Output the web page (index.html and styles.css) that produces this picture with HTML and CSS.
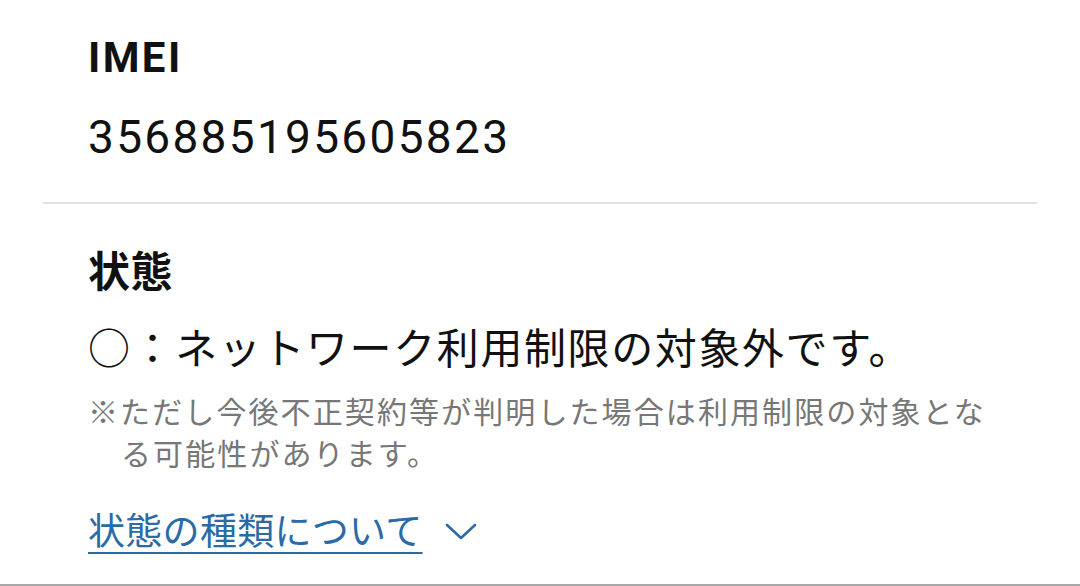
FILE: index.html
```html
<!DOCTYPE html>
<html lang="ja">
<head>
<meta charset="utf-8">
<link rel="stylesheet" href="styles.css">
</head>
<body>
<div class="page">
  <section class="item imei">
    <h2 class="label latin">IMEI</h2>
    <p class="value num">356885195605823</p>
  </section>
  <section class="item status">
    <h2 class="label">状態</h2>
    <p class="value main">○：ネットワーク利用制限の対象外です。</p>
    <p class="note">※ただし今後不正契約等が判明した場合は利用制限の対象となる可能性があります。</p>
    <a class="toggle" href="#"><span class="toggle-text">状態の種類について</span><svg class="chev" width="32" height="17" viewBox="0 0 32 17"><path d="M2 2 L16 15 L30 2" fill="none" stroke="#2a6aa6" stroke-width="2.6" stroke-linecap="round" stroke-linejoin="round"/></svg></a>
  </section>
</div>
</body>
</html>
```
FILE: styles.css
```css
html, body {
  margin: 0;
  padding: 0;
  background: #fff;
}
body {
  font-family: "Noto Sans CJK JP", "Noto Sans", sans-serif;
  color: #111;
  width: 1080px;
  height: 586px;
  overflow: hidden;
  border-bottom: 2px solid #a8a8a8;
  box-sizing: border-box;
}
.page {
  padding: 0 43px;
}
.item {
  padding: 0 45px;
}
.imei {
  padding-top: 28px;
  padding-bottom: 35px;
  border-bottom: 2px solid #e2e2e2;
}
.label {
  margin: 0;
  font-size: 42px;
  font-weight: 700;
  line-height: 60px;
  letter-spacing: 0.5px;
}
.latin {
  font-family: "Roboto", "Noto Sans CJK JP", sans-serif;
  letter-spacing: 2.4px;
}
.value {
  margin: 19px 0 0;
  line-height: 60px;
}
.num {
  font-family: "Roboto", "Noto Sans CJK JP", sans-serif;
  font-size: 46px;
  letter-spacing: 2.3px;
}
.status {
  padding-top: 35px;
}
.main {
  margin-top: 17px;
  font-size: 42px;
  letter-spacing: 1.6px;
}
.note {
  box-sizing: border-box;
  margin: 13px 0 0;
  font-size: 30px;
  line-height: 42px;
  letter-spacing: 2.1px;
  color: #777;
  padding-left: 33px;
  text-indent: -33px;
  width: 915px;
}
.toggle {
  display: inline-flex;
  align-items: center;
  gap: 22px;
  margin-top: 32px;
  text-decoration: none;
  color: #2a6aa6;
}
.toggle-text {
  font-size: 37px;
  line-height: 48px;
  letter-spacing: 0.3px;
  text-decoration: underline;
  text-decoration-thickness: 2px;
  text-underline-offset: 7px;
}
.chev {
  display: block;
  margin-top: 4px;
}
```
